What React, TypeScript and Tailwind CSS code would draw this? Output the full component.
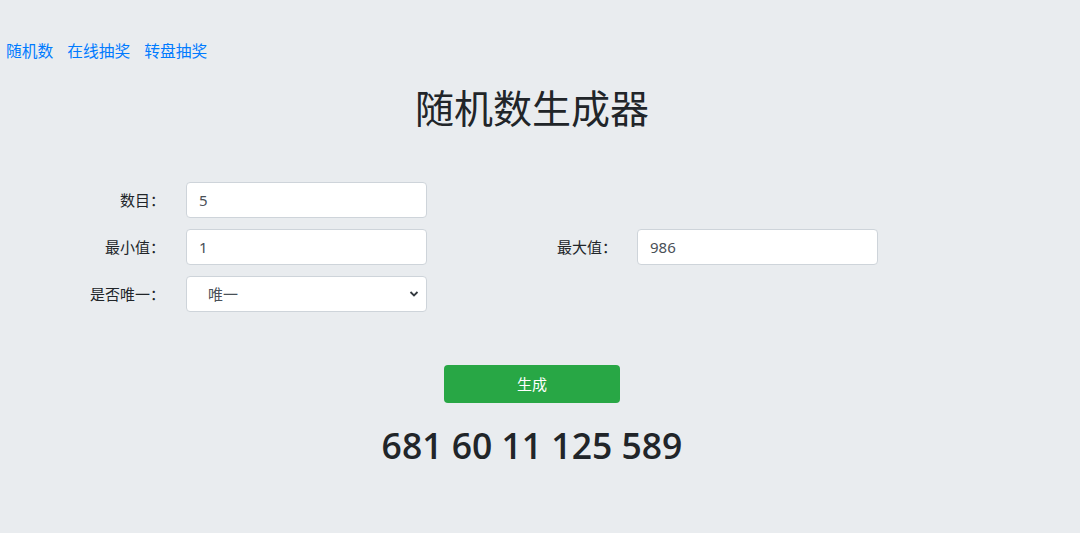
import { useState } from "react";

const FONT = "font-['Noto_Sans','Noto_Sans_CJK_SC',sans-serif]";

const Field = ({ value }: { value: string }) => (
  <input
    defaultValue={value}
    className="h-[36px] w-[241px] rounded-[4px] border border-[#ced4da] bg-white px-[12px] text-[15px] text-[#495057] outline-none"
  />
);

export default function App() {
  const [nums] = useState("681 60 11 125 589");

  return (
    <div className={`min-h-[533px] bg-[#e9ecef] text-[#212529] ${FONT}`}>
      <nav className="flex gap-[14px] pl-[6px] pt-[39px] text-[15.75px] leading-[24px] text-[#007bff]">
        <a href="#">随机数</a>
        <a href="#">在线抽奖</a>
        <a href="#">转盘抽奖</a>
      </nav>

      <div className="w-[1064px]">
        <h1 className="mt-[21px] text-center text-[39px] font-normal leading-[47px]">
          随机数生成器
        </h1>

        <form className="mt-[51px] flex flex-col gap-[11px] text-[15px]">
          <div className="flex items-center">
            <label className="w-[165px] text-right">数目：</label>
            <div className="ml-[21px]">
              <Field value="5" />
            </div>
          </div>
          <div className="flex items-center">
            <label className="w-[165px] text-right">最小值：</label>
            <div className="ml-[21px]">
              <Field value="1" />
            </div>
            <label className="w-[190px] text-right">最大值：</label>
            <div className="ml-[20px]">
              <Field value="986" />
            </div>
          </div>
          <div className="flex items-center">
            <label className="w-[165px] text-right">是否唯一：</label>
            <div className="relative ml-[21px]">
              <select className="h-[36px] w-[241px] appearance-none rounded-[4px] border border-[#ced4da] bg-white pl-[21px] text-[15px] text-[#495057] outline-none">
                <option>唯一</option>
                <option>不唯一</option>
              </select>
              <svg
                className="pointer-events-none absolute right-[8px] top-[14px]"
                width="10"
                height="8"
                viewBox="0 0 10 8"
              >
                <path d="M1.5 2l3.5 3.5L8.5 2" fill="none" stroke="#343a40" strokeWidth="1.8" />
              </svg>
            </div>
          </div>
        </form>

        <div className="mt-[53px] flex justify-center">
          <button className="h-[38px] w-[176px] rounded-[4px] bg-[#28a745] text-[15px] text-white">
            生成
          </button>
        </div>

        <p className="mt-[20px] text-center font-['Open_Sans',sans-serif] text-[35.5px] font-semibold leading-[44px]">
          {nums}
        </p>
      </div>
    </div>
  );
}
